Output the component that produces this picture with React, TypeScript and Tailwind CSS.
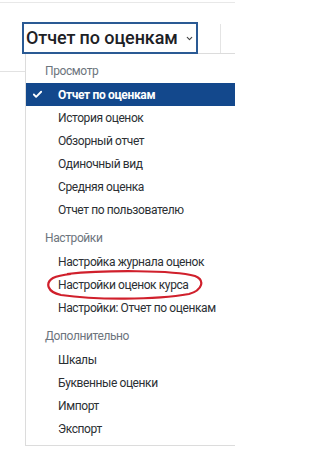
import { ChevronDown, Check } from "lucide-react";

const groups = [
  {
    title: "Просмотр",
    items: [
      "Отчет по оценкам",
      "История оценок",
      "Обзорный отчет",
      "Одиночный вид",
      "Средняя оценка",
      "Отчет по пользователю",
    ],
  },
  {
    title: "Настройки",
    items: [
      "Настройка журнала оценок",
      "Настройки оценок курса",
      "Настройки: Отчет по оценкам",
    ],
  },
  {
    title: "Дополнительно",
    items: ["Шкалы", "Буквенные оценки", "Импорт", "Экспорт"],
  },
];

export default function App() {
  return (
    <div className="relative w-[235px] h-[456px] overflow-hidden bg-white font-['Roboto','Liberation_Sans',sans-serif]">
      <div className="pt-[2px]">
        <div className="h-px bg-[#e8e8e8]" />
      </div>

      <div className="flex items-center pt-[19px] pl-[22px]">
        <div className="relative z-10 flex items-center w-[176px] h-[32px] border-2 border-[#2a5a94] bg-white pl-[2px]">
          <span className="text-[18px] font-medium text-[#1d2125] leading-none tracking-[-0.1px]">
            Отчет по оценкам
          </span>
          <ChevronDown className="ml-auto mr-[2px] w-[9px] h-[9px] text-[#444]" strokeWidth={3} />
        </div>
        <div className="ml-[22px] w-px h-[29px] bg-[#e4e4e4]" />
      </div>

      <div className="flex -mt-[1px]">
        <div className="w-[25px] shrink-0 pt-[18px]">
          <div className="h-px bg-[#e2e2e2]" />
        </div>
        <div className="relative w-[260px] shrink-0 border-t border-l border-b border-[#dcdcdc] bg-white pt-[5px] pb-[5px]">
          {groups.map((g, gi) => (
            <div key={g.title} className={gi > 0 ? "mt-[5px]" : ""}>
              <div className="h-[24px] flex items-center pl-[19px] text-[12px] tracking-[-0.4px] text-[#6d757d]">
                {g.title}
              </div>
              {g.items.map((item, ii) => {
                const active = gi === 0 && ii === 0;
                return (
                  <div
                    key={item}
                    className={
                      active
                        ? "relative h-[23px] flex items-center pl-[32px] text-[12px] tracking-[-0.35px] font-bold text-white bg-[#13488c]"
                        : "h-[23px] flex items-center pl-[32px] text-[12px] tracking-[-0.4px] text-[#2b2f33]"
                    }
                  >
                    {active && (
                      <Check
                        className="absolute left-[6px] w-[11px] h-[11px] text-white"
                        strokeWidth={4}
                      />
                    )}
                    {item}
                  </div>
                );
              })}
            </div>
          ))}
        </div>
      </div>

      <svg
        className="absolute left-[45px] top-[270px] pointer-events-none"
        width="160"
        height="30"
        viewBox="0 0 160 30"
      >
        <path
          d="M22 4 C60 0 128 0 150 6 C160 10 158 20 144 24 C110 30 50 30 16 25 C2 22 0 13 8 8 C12 6 17 5 26 4"
          fill="none"
          stroke="#d0202c"
          strokeWidth="2.2"
        />
      </svg>
    </div>
  );
}
